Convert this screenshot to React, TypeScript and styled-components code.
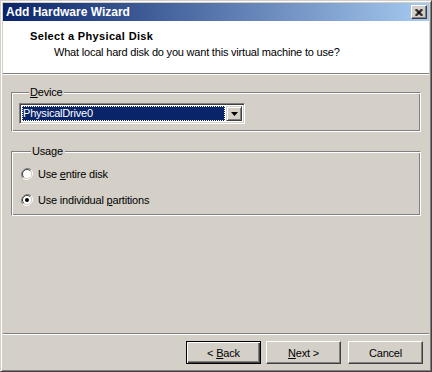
import React from "react";
import styled, { createGlobalStyle } from "styled-components";

const Global = createGlobalStyle`
  html, body {
    margin: 0;
    padding: 0;
    background: #d4d0c8;
  }
  body {
    font-family: "Liberation Sans", Arial, sans-serif;
    font-size: 11px;
    letter-spacing: -0.2px;
    color: #000;
  }
`;

const Window = styled.div`
  width: 432px;
  height: 372px;
  box-sizing: border-box;
  display: flex;
  flex-direction: column;
  background: #d4d0c8;
  border: 1px solid;
  border-color: #d4d0c8 #404040 #404040 #d4d0c8;
  box-shadow: inset 1px 1px 0 #fff, inset -1px -1px 0 #808080;
  padding: 2px;
`;

const TitleBar = styled.div`
  height: 18px;
  display: flex;
  align-items: center;
  justify-content: space-between;
  padding: 0 2px 0 3px;
  background: linear-gradient(to right, #0a246a, #a6caf0);
  color: #fff;
  font-weight: bold;
  font-size: 12px;
  letter-spacing: 0;
`;

const CloseButton = styled.div`
  width: 16px;
  height: 14px;
  box-sizing: border-box;
  display: flex;
  align-items: center;
  justify-content: center;
  background: #d4d0c8;
  border: 1px solid;
  border-color: #fff #404040 #404040 #fff;
  box-shadow: inset -1px -1px 0 #808080;
`;

const Header = styled.div`
  height: 53px;
  background: #fff;
  border-bottom: 1px solid #808080;
  box-shadow: 0 1px 0 #fff;
  padding: 9px 0 0 27px;
  box-sizing: border-box;
`;

const HeaderTitle = styled.div`
  font-weight: bold;
  font-size: 11px;
  letter-spacing: 0.35px;
  line-height: 13px;
`;

const HeaderSub = styled.div`
  margin: 3px 0 0 24px;
  line-height: 13px;
`;

const Body = styled.div`
  flex: 1;
  padding: 12px 8px 0 8px;
  display: flex;
  flex-direction: column;
  gap: 13px;
`;

const Group = styled.fieldset<{ $pad: string }>`
  margin: 0;
  padding: ${(p) => p.$pad};
  border: 1px solid;
  border-color: #808080 #fff #fff #808080;
  box-shadow: inset 1px 1px 0 #fff, inset -1px -1px 0 #808080;
  min-width: 0;
`;

const Legend = styled.legend`
  margin-left: 10px;
  padding: 0 2px 0 1px;
  background: #d4d0c8;
  line-height: 13px;
`;

const U = styled.span`
  text-decoration: underline;
`;

const Combo = styled.div`
  width: 226px;
  height: 21px;
  box-sizing: border-box;
  display: flex;
  align-items: stretch;
  background: #fff;
  border: 1px solid;
  border-color: #808080 #fff #fff #808080;
  box-shadow: inset 1px 1px 0 #404040, inset -1px -1px 0 #d4d0c8;
  padding: 2px;
`;

const ComboValue = styled.div`
  flex: 1;
  margin-right: 1px;
  background: #0a246a;
  color: #fff;
  outline: 1px dotted #fff;
  outline-offset: -1px;
  line-height: 15px;
  padding-left: 1px;
`;

const DropButton = styled.div`
  width: 16px;
  box-sizing: border-box;
  display: flex;
  align-items: center;
  justify-content: center;
  background: #d4d0c8;
  border: 1px solid;
  border-color: #d4d0c8 #404040 #404040 #d4d0c8;
  box-shadow: inset 1px 1px 0 #fff, inset -1px -1px 0 #808080;
`;

const RadioRow = styled.label<{ $gap?: number }>`
  display: flex;
  align-items: center;
  gap: 5px;
  height: 13px;
  margin-top: ${(p) => p.$gap ?? 0}px;
`;

const Footer = styled.div`
  border-top: 1px solid #808080;
  box-shadow: inset 0 1px 0 #fff;
  padding: 7px 6px 5px 0;
  display: flex;
  justify-content: flex-end;
  gap: 5px;
`;

const Button = styled.button<{ $default?: boolean }>`
  width: 75px;
  height: 23px;
  margin: 0;
  padding: 0;
  font-family: "Liberation Sans", Arial, sans-serif;
  font-size: 11px;
  letter-spacing: inherit;
  color: #000;
  background: #d4d0c8;
  border: 1px solid;
  border-color: ${(p) => (p.$default ? "#000" : "#fff #404040 #404040 #fff")};
  box-shadow: ${(p) =>
    p.$default
      ? "inset 1px 1px 0 #fff, inset -1px -1px 0 #404040, inset -2px -2px 0 #808080"
      : "inset -1px -1px 0 #808080"};
  &:last-child {
    margin-left: 2px;
  }
`;

const Radio: React.FC<{ checked?: boolean }> = ({ checked }) => (
  <svg width="12" height="12" viewBox="0 0 12 12">
    <path d="M10.2 1.8 A6 6 0 0 0 1.8 10.2" stroke="#808080" strokeWidth="1" fill="none" />
    <path d="M1.8 10.2 A6 6 0 0 0 10.2 1.8" stroke="#fff" strokeWidth="1" fill="none" />
    <circle cx="6" cy="6" r="4.5" fill="#fff" />
    <path d="M9.2 2.8 A4.5 4.5 0 0 0 2.8 9.2" stroke="#404040" strokeWidth="1" fill="none" />
    <path d="M2.8 9.2 A4.5 4.5 0 0 0 9.2 2.8" stroke="#d4d0c8" strokeWidth="1" fill="none" />
    {checked && <circle cx="6" cy="6" r="2" fill="#000" />}
  </svg>
);

export default function App() {
  return (
    <>
      <Global />
      <Window>
        <TitleBar>
          <span>Add Hardware Wizard</span>
          <CloseButton>
            <svg width="8" height="7" viewBox="0 0 8 7">
              <path d="M0.5 0 L7.5 7 M1.5 0 L7.5 6 M0.5 1 L6.5 7 M7.5 0 L0.5 7 M6.5 0 L0.5 6 M7.5 1 L1.5 7" stroke="#000" strokeWidth="1" />
            </svg>
          </CloseButton>
        </TitleBar>
        <Header>
          <HeaderTitle>Select a Physical Disk</HeaderTitle>
          <HeaderSub>What local hard disk do you want this virtual machine to use?</HeaderSub>
        </Header>
        <Body>
          <Group $pad="4px 8px 7px 7px">
            <Legend>
              <U>D</U>evice
            </Legend>
            <Combo>
              <ComboValue>PhysicalDrive0</ComboValue>
              <DropButton>
                <svg width="7" height="4" viewBox="0 0 7 4">
                  <path d="M0 0 H7 L3.5 4 Z" fill="#000" />
                </svg>
              </DropButton>
            </Combo>
          </Group>
          <Group $pad="9px 8px 9px 9px">
            <Legend>Usage</Legend>
            <RadioRow>
              <Radio />
              <span>
                Use <U>e</U>ntire disk
              </span>
            </RadioRow>
            <RadioRow $gap={13}>
              <Radio checked />
              <span>
                Use individual <U>p</U>artitions
              </span>
            </RadioRow>
          </Group>
        </Body>
        <Footer>
          <Button $default>
            &lt; <U>B</U>ack
          </Button>
          <Button>
            <U>N</U>ext &gt;
          </Button>
          <Button>Cancel</Button>
        </Footer>
      </Window>
    </>
  );
}
